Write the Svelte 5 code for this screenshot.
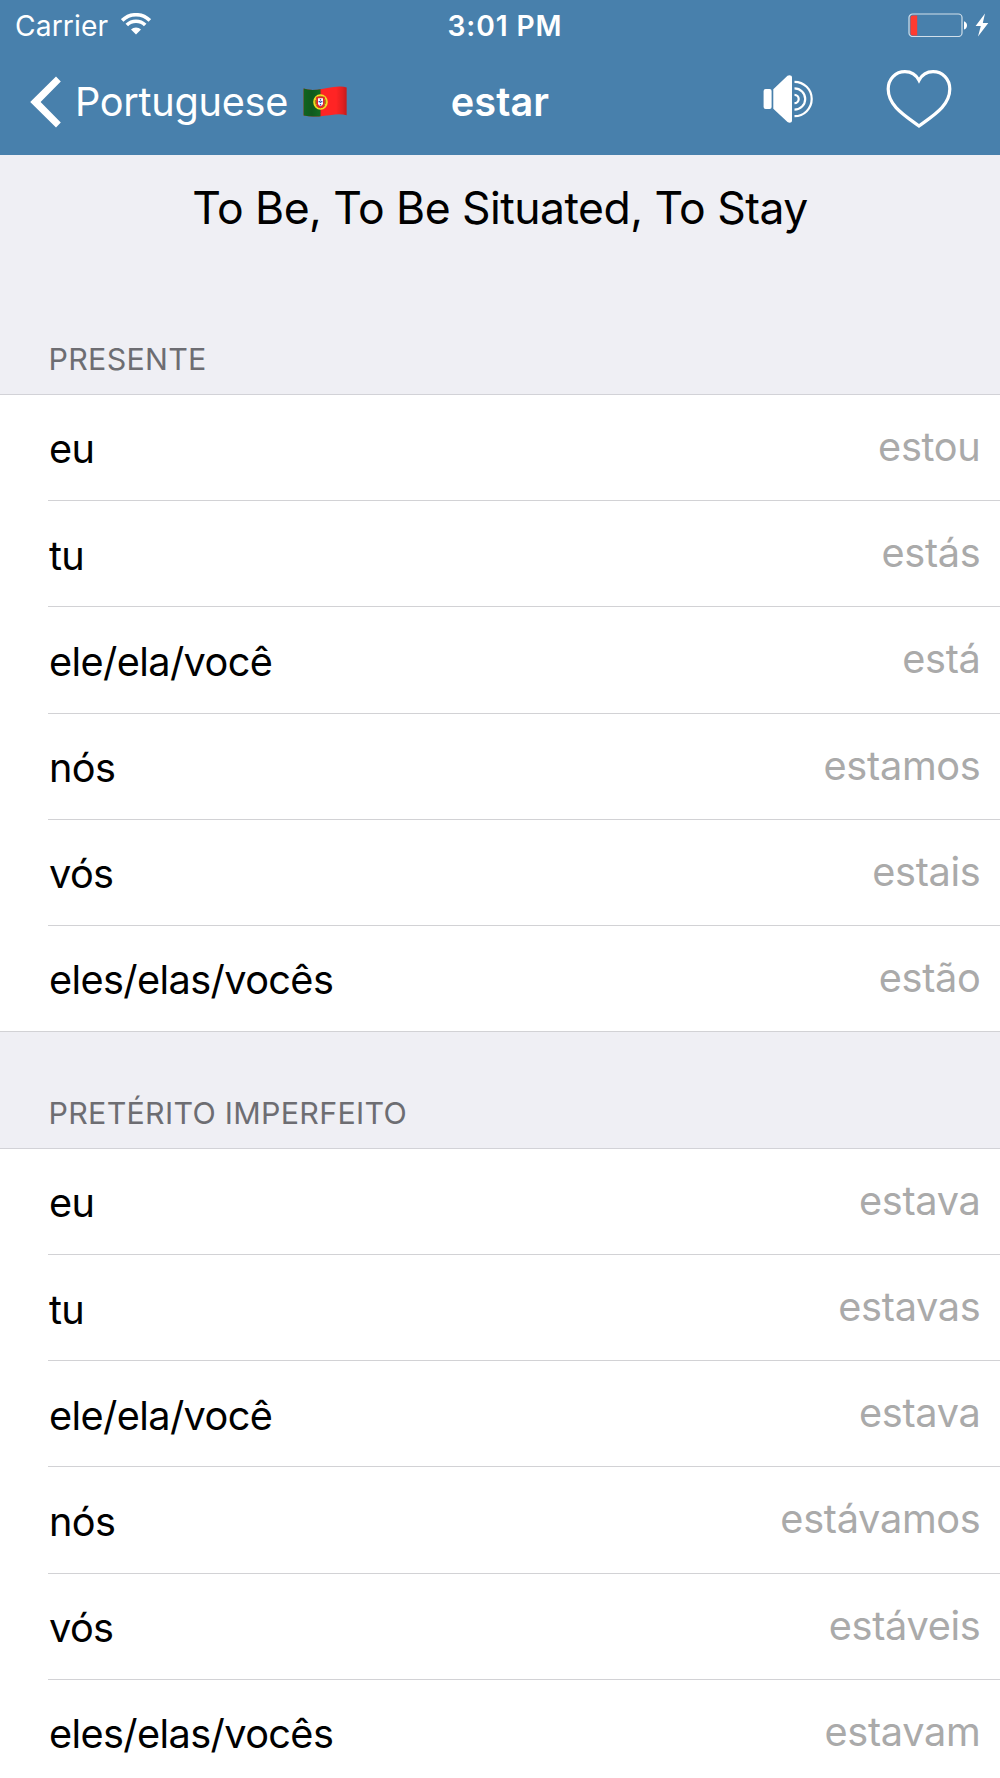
<script lang="ts">
	type Form = { pronoun: string; verb: string };
	type Tense = { name: string; forms: Form[] };

	const pronouns = ['eu', 'tu', 'ele/ela/você', 'nós', 'vós', 'eles/elas/vocês'];

	const tense = (name: string, verbs: string[]): Tense => ({
		name,
		forms: verbs.map((verb, i) => ({ pronoun: pronouns[i], verb }))
	});

	const tenses: Tense[] = [
		tense('Presente', ['estou', 'estás', 'está', 'estamos', 'estais', 'estão']),
		tense('Pretérito Imperfeito', ['estava', 'estavas', 'estava', 'estávamos', 'estáveis', 'estavam'])
	];
</script>

<div class="screen">
	<header>
		<div class="status">
			<div class="carrier">
				<span>Carrier</span>
				<svg class="wifi" width="30" height="22" viewBox="0 0 30 22" fill="none" stroke="#fff" stroke-width="3.6">
					<path d="M1.2 7.4a19.6 19.6 0 0 1 27.6 0" />
					<path d="M5.8 12.1a13 13 0 0 1 18.4 0" />
					<path d="M15 21.6l-5-5.1a7 7 0 0 1 10 0z" fill="#fff" stroke="none" />
				</svg>
			</div>
			<span class="time">3:01 PM</span>
			<div class="power">
				<svg width="60" height="24" viewBox="0 0 60 24">
					<rect x="1" y="1" width="53" height="22.5" rx="3.6" fill="none" stroke="#fff" stroke-opacity=".75" stroke-width="1.2" />
					<path d="M4.5 2.6h4.7v19.8H4.5a2 2 0 0 1-2-2V4.6a2 2 0 0 1 2-2z" fill="#ff3b30" />
					<path d="M56 8.2c4 1.2 4 7.2 0 8.400z" fill="#fff" />
				</svg>
				<svg width="14" height="24" viewBox="0 0 14 24" fill="#fff">
					<path d="M10 .5L.6 13h5.200L3 23.500 13.300 10H7.800z" />
				</svg>
			</div>
		</div>

		<nav>
			<div class="back">
				<svg width="32" height="52" viewBox="0 0 32 52" fill="#fff">
					<path d="M26 .6L.2 26 26 51.400l4.800-4.800L10.600 26 30.800 5.400z" />
				</svg>
				<span>Portuguese</span>
				<svg class="flag" width="44" height="31" viewBox="0 0 44 31">
					<defs>
						<clipPath id="wave">
							<path d="M.6 2.600Q8 5 19 3T37 .6Q41 .6 43.600 1.600V29.200Q39 27.800 32 28.400C22 29.400 12 32 .6 29.600z" />
						</clipPath>
						<linearGradient id="shade">
							<stop offset="0" stop-color="#000" stop-opacity=".1" />
							<stop offset=".2" stop-color="#000" stop-opacity=".2" />
							<stop offset=".45" stop-color="#000" stop-opacity="0" />
							<stop offset=".75" stop-color="#000" stop-opacity="0" />
							<stop offset=".9" stop-color="#000" stop-opacity=".12" />
							<stop offset="1" stop-color="#000" stop-opacity=".25" />
						</linearGradient>
					</defs>
					<g clip-path="url(#wave)">
						<rect width="44" height="31" fill="#ff2424" />
						<rect width="17.500" height="31" fill="#137023" />
						<rect width="44" height="31" fill="url(#shade)" />
						<ellipse cx="17.500" cy="16" rx="6.500" ry="7" fill="#a88a10" stroke="#f4dc22" stroke-width="1.600" />
						<path d="M11.500 13l12 6M12 19.500l11-7" stroke="#f4dc22" stroke-width=".8" />
						<path d="M13.300 10.800h8.400v6.600q0 4.200-4.200 4.800-4.200-.6-4.200-4.800z" fill="#e0262c" />
						<path d="M15 12.300h5v5q0 2.600-2.500 3-2.500-.4-2.500-3z" fill="#fff" />
						<path d="M17.500 13v6.600M15.600 15.700h3.800" stroke="#3453b5" stroke-width="1.300" stroke-dasharray="1.500 1" />
					</g>
				</svg>
			</div>
			<h1>estar</h1>
			<div class="actions">
				<svg width="52" height="50" viewBox="0 0 52 50">
					<rect x=".6" y="15" width="8" height="20" rx="2" fill="#fff" />
					<path d="M10.300 15.300L24.500 1.700Q26.500.6 28.300 1.800Q29 2.200 29 3.500V46.500Q29 47.800 28.300 48.300Q26.500 49.200 24.500 48L10.300 34.700z" fill="#fff" />
					<g fill="none" stroke="#fff" stroke-width="2.200">
						<path d="M31.500 20.800a4.200 4.200 0 0 1 0 8.400" />
						<path d="M31.500 14.300a10.700 10.700 0 0 1 0 21.400" />
						<path d="M31.500 7.800a17.200 17.200 0 0 1 0 34.400" />
					</g>
				</svg>
				<svg width="66" height="60" viewBox="0 0 66 60" fill="none" stroke="#fff" stroke-width="3.200">
					<path d="M33 11.300C29.700 5 24.500 2.600 19 2.600 9.500 2.600 2.200 10 2.200 20 2.200 37 19 46.500 33 57 47 46.500 63.800 37 63.800 20 63.800 10 56.500 2.600 47 2.600 41.500 2.600 36.300 5 33 11.300z" />
				</svg>
			</div>
		</nav>
	</header>

	<p class="meaning">To Be, To Be Situated, To Stay</p>

	{#each tenses as t (t.name)}
		<section>
			<h2>{t.name}</h2>
			<ul>
				{#each t.forms as f (f.pronoun)}
					<li>
						<span class="pronoun">{f.pronoun}</span>
						<span class="verb">{f.verb}</span>
					</li>
				{/each}
			</ul>
		</section>
	{/each}
</div>

<style>
	:global(body) {
		margin: 0;
		background: #efeff4;
	}
	.screen {
		height: 1778px;
		overflow: hidden;
		font-family: Inter, 'Liberation Sans', sans-serif;
		color: #000;
	}
	header {
		box-sizing: border-box;
		height: 155px;
		background: #4880ac;
		color: #fff;
	}
	svg {
		display: block;
		flex: none;
	}
	.status,
	nav {
		box-sizing: border-box;
		display: grid;
		grid-template-columns: 1fr auto 1fr;
		align-items: center;
	}
	.status {
		height: 48px;
		padding: 3px 11px 0 15px;
		font-size: 28.2px;
	}
	.carrier {
		display: flex;
		align-items: center;
		gap: 13px;
		letter-spacing: 0.12px;
	}
	.wifi {
		margin-top: -4px;
	}
	.time {
		font-weight: 600;
		letter-spacing: 0.9px;
		padding-left: 6px;
	}
	.power {
		display: flex;
		justify-content: flex-end;
		gap: 7px;
		margin-top: -2px;
	}
	nav {
		height: 107px;
		padding: 0 48px 0 30px;
		font-size: 39.7px;
	}
	.back {
		display: flex;
		align-items: center;
		letter-spacing: -0.3px;
	}
	.back span {
		margin-left: 13px;
	}
	.flag {
		margin-left: 15px;
	}
	h1 {
		margin: 0;
		padding-left: 18px;
		font-size: inherit;
		font-weight: 600;
		letter-spacing: 0.06px;
	}
	.actions {
		display: flex;
		align-items: center;
		justify-content: flex-end;
		gap: 71px;
		margin-top: -6px;
	}
	.meaning {
		box-sizing: border-box;
		height: 123.2px;
		margin: 0;
		padding-top: 25px;
		font-size: 44.5px;
		line-height: 56px;
		letter-spacing: -0.55px;
		text-align: center;
	}
	h2 {
		box-sizing: border-box;
		height: 115.8px;
		margin: 0;
		padding: 63px 0 0 48.5px;
		font-size: 30.4px;
		font-weight: 400;
		line-height: 36px;
		letter-spacing: 0.3px;
		text-transform: uppercase;
		color: #6d6d72;
	}
	ul {
		margin: 0;
		padding: 0;
		list-style: none;
		background: #fff;
		border-top: 1px solid #d2d2d7;
	}
	li {
		box-sizing: border-box;
		display: flex;
		justify-content: space-between;
		height: 106.2px;
		margin-left: 48px;
		padding-right: 19.5px;
		border-bottom: 1px solid #d2d2d5;
		font-size: 39.7px;
		line-height: 48px;
	}
	li:last-child {
		margin-left: 0;
		padding-left: 48px;
	}
	.pronoun {
		padding: 30.5px 0 0 1px;
		letter-spacing: -0.62px;
	}
	.verb {
		padding-top: 28px;
		letter-spacing: -0.3px;
		color: #aaa;
	}
</style>
